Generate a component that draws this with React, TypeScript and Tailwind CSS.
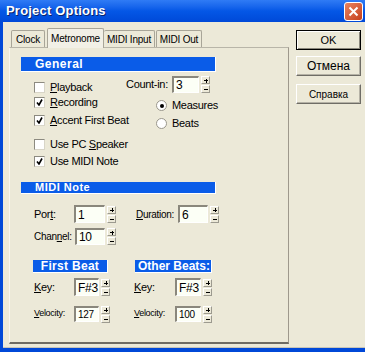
import React from "react";

const font = { fontFamily: '"Liberation Sans", Arial, sans-serif' };

function Spin() {
  return (
    <div className="flex flex-col w-[9px] h-[17px] ml-[2px] justify-between">
      <div className="h-[8px] border-t border-l border-white border-r border-b border-r-[#9c9a8f] border-b-[#9c9a8f] bg-[#ECE9D8] relative">
        <div className="absolute left-[2px] top-[3px] w-[4px] h-px bg-black" />
        <div className="absolute left-[3.5px] top-[1.5px] w-px h-[4px] bg-black" />
      </div>
      <div className="h-[8px] border-t border-l border-white border-r border-b border-r-[#9c9a8f] border-b-[#9c9a8f] bg-[#ECE9D8] relative">
        <div className="absolute left-[2px] top-[3px] w-[4px] h-px bg-black" />
      </div>
    </div>
  );
}

function Field({ w, h = 18, value, small }: { w: number; h?: number; value: string; small?: boolean }) {
  return (
    <div
      className={`bg-[#FCFFF6] border-t-2 border-l-2 border-t-[#8a877c] border-l-[#8a877c] border-b border-r border-b-white border-r-white flex items-center pl-[2px] ${small ? "text-[10px]" : "text-[12px]"} text-black leading-none`}
      style={{ width: w, height: h }}
    >
      {value}
    </div>
  );
}

function Check({ checked, label }: { checked: boolean; label: React.ReactNode }) {
  return (
    <div className="flex items-center h-[15px]">
      <div className="shrink-0 w-[11px] h-[11px] bg-white border-t border-l border-t-[#8c8a80] border-l-[#8c8a80] border-b border-r border-b-[#d8d5c8] border-r-[#d8d5c8] flex items-center justify-center">
        {checked && (
          <svg width="7" height="7" viewBox="0 0 7 7">
            <path d="M1 3.5 L3 6 L6 0.5" stroke="black" strokeWidth="1.6" fill="none" />
          </svg>
        )}
      </div>
      <span className="ml-[5px] text-[11px] text-black tracking-[-0.3px]">{label}</span>
    </div>
  );
}

function Radio({ checked, label }: { checked: boolean; label: string }) {
  return (
    <div className="flex items-center h-[15px]">
      <div className="shrink-0 w-[11px] h-[11px] rounded-full bg-white border border-[#9a978c] flex items-center justify-center">
        {checked && <div className="w-[4px] h-[4px] rounded-full bg-black" />}
      </div>
      <span className="ml-[5px] text-[11px] text-black tracking-[-0.3px]">{label}</span>
    </div>
  );
}

function U({ children }: { children: React.ReactNode }) {
  return <span className="underline underline-offset-1">{children}</span>;
}

function Btn({ children, def, cls }: { children: React.ReactNode; def?: boolean; cls?: string }) {
  return (
    <div
      className={`w-[65px] h-[20px] flex items-center justify-center bg-[#ECE9D8] text-black ${
        def
          ? "border border-black shadow-[inset_1px_1px_0_#fff,inset_-1px_-1px_0_#8a877c]"
          : "border-t border-l border-white border-b border-r border-b-[#6f6d66] border-r-[#6f6d66] shadow-[inset_-1px_-1px_0_#b5b2a6]"
      } ${cls ?? ""}`}
    >
      {children}
    </div>
  );
}

export default function App() {
  return (
    <div className="w-[365px] h-[352px] bg-[#0048D8] flex flex-col overflow-hidden whitespace-nowrap" style={font}>
      {/* title bar */}
      <div className="h-[22px] shrink-0 flex items-center justify-between bg-gradient-to-b from-[#2F7BF5] via-[#0457E6] to-[#0049D8] pl-[6px] pr-[2px]">
        <span className="text-white font-bold text-[13px] tracking-[0.2px] [text-shadow:1px_1px_0_#0a246a]">
          Project Options
        </span>
        <div className="w-[19px] h-[19px] rounded-[3px] border border-white bg-gradient-to-br from-[#E8835F] to-[#C63E18] flex items-center justify-center">
          <svg width="11" height="11" viewBox="0 0 11 11">
            <path d="M1.5 1.5 L9.5 9.5 M9.5 1.5 L1.5 9.5" stroke="white" strokeWidth="2" />
          </svg>
        </div>
      </div>

      {/* body */}
      <div className="ml-[3px] h-[326px] bg-[#ECE9D8] flex pl-[6px] border-b border-[#C7C4B8]">
        {/* left: tabs + panel */}
        <div className="flex flex-col w-[280px] pt-[6px]">
          <div className="flex items-end h-[19px] text-[10px] text-black tracking-[-0.2px]">
            <div className="ml-[2px] w-[34px] h-[17px] border-t border-l border-r border-[#A8A598] rounded-t-[2px] flex items-center justify-center">
              Clock
            </div>
            <div className="ml-[2px] w-[57px] h-[20px] -mb-px relative z-10 bg-[#F2F0E6] border-t border-l border-r border-[#A8A598] rounded-t-[2px] flex items-center justify-center">
              Metronome
            </div>
            <div className="w-[51px] h-[17px] border-t border-r border-[#A8A598] rounded-t-[2px] flex items-center justify-center">
              MIDI Input
            </div>
            <div className="ml-px w-[46px] h-[17px] border-t border-l border-r border-[#A8A598] rounded-t-[2px] flex items-center justify-center">
              MIDI Out
            </div>
          </div>
          <div className="h-[297px] border-t border-t-[#B8B5A8] border-l border-l-[#F7F6F0] border-r border-r-[#9E988C] border-b-2 border-b-[#6E6B63] flex flex-col text-[11px] tracking-[-0.3px] text-black">
            {/* General */}
            <div className="mt-[9px] ml-[11px] w-[195px] h-[15px] bg-[#0A5CE8] border-b border-r border-white text-white font-bold text-[12px] flex items-center pl-[14px] tracking-[0.5px]">
              General
            </div>
            <div className="flex">
              <div className="ml-[24px] w-[92px] flex flex-col pt-[8px]">
                <Check checked={false} label={<><U>P</U>layback</>} />
                <Check checked label={<><U>R</U>ecording</>} />
                <div className="mt-[3px]">
                  <Check checked label={<><U>A</U>ccent First Beat</>} />
                </div>
                <div className="mt-[9px]">
                  <Check checked={false} label={<>Use PC <U>S</U>peaker</>} />
                </div>
                <div className="mt-[2px]">
                  <Check checked label={<>Use MIDI Note</>} />
                </div>
              </div>
              <div className="flex flex-col pt-[4px]">
                <div className="flex items-center h-[17px]">
                  <span className="w-[46px]">Count-in:</span>
                  <Field w={27} h={17} value="3" />
                  <Spin />
                </div>
                <div className="mt-[5px] ml-[30px]">
                  <Radio checked label="Measures" />
                </div>
                <div className="mt-[3px] ml-[30px]">
                  <Radio checked={false} label="Beats" />
                </div>
              </div>
            </div>

            {/* MIDI Note */}
            <div className="mt-[13px] ml-[11px] w-[195px] h-[12px] bg-[#0A5CE8] border-b border-r border-white text-white font-bold text-[11px] flex items-center pl-[14px] tracking-[0.5px]">
              MIDI Note
            </div>
            <div className="mt-[11px] ml-[24px] flex items-center h-[18px]">
              <span className="w-[40px]">Por<U>t</U>:</span>
              <Field w={31} h={18} value="1" />
              <Spin />
              <span className="ml-[20px] w-[42px] text-[10px]"><U>D</U>uration:</span>
              <Field w={30} h={18} value="6" />
              <Spin />
            </div>
            <div className="mt-[5px] ml-[24px] flex items-center h-[17px]">
              <span className="w-[41px] text-[10px]">Chan<U>n</U>el:</span>
              <Field w={30} h={17} value="10" />
              <Spin />
            </div>

            {/* First / Other beats */}
            <div className="mt-[15px] ml-[23px] flex">
              <div className="w-[75px] h-[13px] bg-[#0A5CE8] border-b border-r border-white text-white font-bold text-[12px] flex items-center justify-center tracking-[0.3px]">
                First Beat
              </div>
              <div className="ml-[27px] w-[77px] h-[13px] bg-[#0A5CE8] border-b border-r border-white text-white font-bold text-[12px] flex items-center justify-end pr-[1px] tracking-[0px]">
                Other Beats:
              </div>
            </div>
            <div className="mt-[5px] ml-[24px] flex items-center h-[18px]">
              <span className="w-[40px]"><U>K</U>ey:</span>
              <Field w={25} h={18} value="F#3" />
              <Spin />
              <span className="ml-[24px] w-[41px]"><U>K</U>ey:</span>
              <Field w={26} h={18} value="F#3" />
              <Spin />
            </div>
            <div className="mt-[10px] ml-[24px] flex items-center h-[16px] text-[9px]">
              <span className="w-[40px]"><U>V</U>elocity:</span>
              <Field w={25} h={16} value="127" small />
              <Spin />
              <span className="ml-[24px] w-[41px]"><U>V</U>elocity:</span>
              <Field w={26} h={16} value="100" small />
              <Spin />
            </div>
          </div>
        </div>

        {/* right: buttons */}
        <div className="ml-[7px] pt-[8px] flex flex-col text-[11px]">
          <Btn def>OK</Btn>
          <Btn cls="mt-[6px] text-[12px]">Отмена</Btn>
          <Btn cls="mt-[8px] text-[10px]">Справка</Btn>
        </div>
      </div>
    </div>
  );
}
